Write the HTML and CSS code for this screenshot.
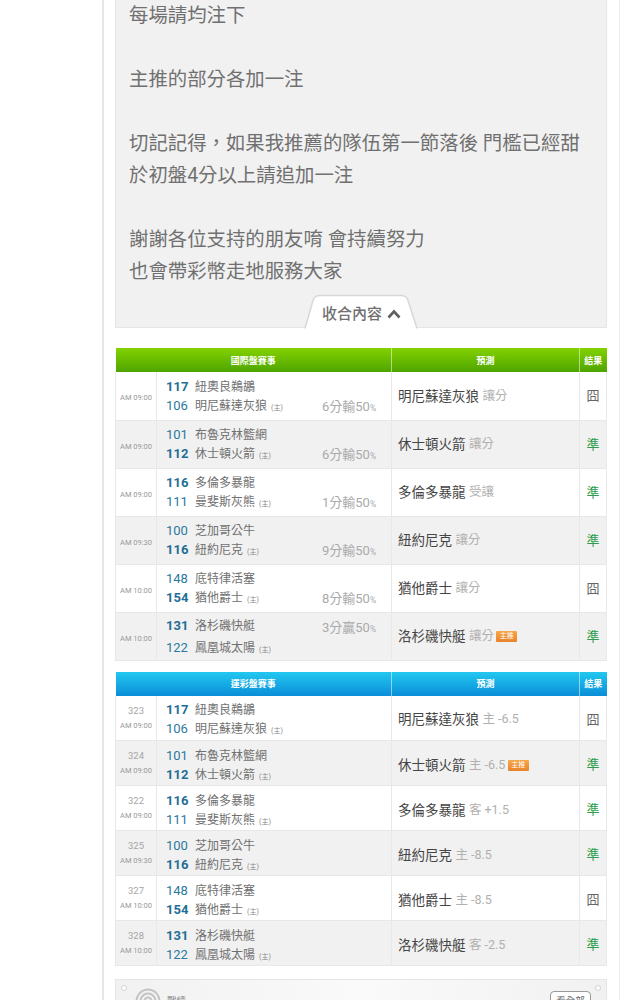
FILE: index.html
```html
<!DOCTYPE html>
<html lang="zh-Hant">
<head>
<meta charset="utf-8">
<title>賽事預測</title>
<link rel="stylesheet" href="styles.css">
</head>
<body>
<main class="wrap">
  <section class="panel">
    <p class="line">每場請均注下</p>
    <p class="line gap">主推的部分各加一注</p>
    <p class="line gap">切記記得，如果我推薦的隊伍第一節落後 門檻已經甜</p>
    <p class="line">於初盤4分以上請追加一注</p>
    <p class="line gap">謝謝各位支持的朋友唷 會持續努力</p>
    <p class="line">也會帶彩幣走地服務大家</p>
    <div class="tab">
      <svg class="tab-bg" width="114" height="34" viewBox="0 0 114 34"><path d="M1 34 L9 6 Q10.500 1 16 1 L97 1 Q102.500 1 104 6 L113 34" fill="#fff" stroke="#d8d8d8" stroke-width="1.500"/></svg>
      <span class="tab-label">收合內容</span>
      <svg class="tab-chev" width="14" height="10" viewBox="0 0 14 10"><path d="M1.500 8.500 L7 2.500 L12.500 8.500" fill="none" stroke="#5f5f5f" stroke-width="2.600"/></svg>
    </div>
  </section>

  <table class="games green">
    <colgroup><col class="c-time"><col class="c-team"><col class="c-pick"><col class="c-res"></colgroup>
    <thead><tr><th colspan="2">國際盤賽事</th><th>預測</th><th>結果</th></tr></thead>
    <tbody>
      <tr><td class="time">AM 09:00</td><td><div class="match"><div class="teams"><div class="t"><b>117</b><span>紐奧良鵜鶘</span></div><div class="t"><i>106</i><span>明尼蘇達灰狼</span><small>(主)</small></div></div><div class="hcp">6分輸50<em>%</em></div></div></td><td class="pick">明尼蘇達灰狼 <span>讓分</span></td><td class="res">囧</td></tr>
      <tr><td class="time">AM 09:00</td><td><div class="match"><div class="teams"><div class="t"><i>101</i><span>布魯克林籃網</span></div><div class="t"><b>112</b><span>休士頓火箭</span><small>(主)</small></div></div><div class="hcp">6分輸50<em>%</em></div></div></td><td class="pick">休士頓火箭 <span>讓分</span></td><td class="res ok">準</td></tr>
      <tr><td class="time">AM 09:00</td><td><div class="match"><div class="teams"><div class="t"><b>116</b><span>多倫多暴龍</span></div><div class="t"><i>111</i><span>曼斐斯灰熊</span><small>(主)</small></div></div><div class="hcp">1分輸50<em>%</em></div></div></td><td class="pick">多倫多暴龍 <span>受讓</span></td><td class="res ok">準</td></tr>
      <tr><td class="time">AM 09:30</td><td><div class="match"><div class="teams"><div class="t"><i>100</i><span>芝加哥公牛</span></div><div class="t"><b>116</b><span>紐約尼克</span><small>(主)</small></div></div><div class="hcp">9分輸50<em>%</em></div></div></td><td class="pick">紐約尼克 <span>讓分</span></td><td class="res ok">準</td></tr>
      <tr><td class="time">AM 10:00</td><td><div class="match"><div class="teams"><div class="t"><i>148</i><span>底特律活塞</span></div><div class="t"><b>154</b><span>猶他爵士</span><small>(主)</small></div></div><div class="hcp">8分輸50<em>%</em></div></div></td><td class="pick">猶他爵士 <span>讓分</span></td><td class="res">囧</td></tr>
      <tr><td class="time">AM 10:00</td><td><div class="match wide"><div class="teams"><div class="t"><b>131</b><span>洛杉磯快艇</span></div><div class="t"><i>122</i><span>鳳凰城太陽</span><small>(主)</small></div></div><div class="hcp top">3分贏50<em>%</em></div></div></td><td class="pick">洛杉磯快艇 <span>讓分</span> <u>主推</u></td><td class="res ok">準</td></tr>
    </tbody>
  </table>

  <table class="games blue">
    <colgroup><col class="c-time"><col class="c-team"><col class="c-pick"><col class="c-res"></colgroup>
    <thead><tr><th colspan="2">運彩盤賽事</th><th>預測</th><th>結果</th></tr></thead>
    <tbody>
      <tr><td class="time"><div class="no">323</div>AM 09:00</td><td><div class="match"><div class="teams"><div class="t"><b>117</b><span>紐奧良鵜鶘</span></div><div class="t"><i>106</i><span>明尼蘇達灰狼</span><small>(主)</small></div></div></div></td><td class="pick">明尼蘇達灰狼 <span>主 -6.5</span></td><td class="res">囧</td></tr>
      <tr><td class="time"><div class="no">324</div>AM 09:00</td><td><div class="match"><div class="teams"><div class="t"><i>101</i><span>布魯克林籃網</span></div><div class="t"><b>112</b><span>休士頓火箭</span><small>(主)</small></div></div></div></td><td class="pick">休士頓火箭 <span>主 -6.5</span> <u>主推</u></td><td class="res ok">準</td></tr>
      <tr><td class="time"><div class="no">322</div>AM 09:00</td><td><div class="match"><div class="teams"><div class="t"><b>116</b><span>多倫多暴龍</span></div><div class="t"><i>111</i><span>曼斐斯灰熊</span><small>(主)</small></div></div></div></td><td class="pick">多倫多暴龍 <span>客 +1.5</span></td><td class="res ok">準</td></tr>
      <tr><td class="time"><div class="no">325</div>AM 09:30</td><td><div class="match"><div class="teams"><div class="t"><i>100</i><span>芝加哥公牛</span></div><div class="t"><b>116</b><span>紐約尼克</span><small>(主)</small></div></div></div></td><td class="pick">紐約尼克 <span>主 -8.5</span></td><td class="res ok">準</td></tr>
      <tr><td class="time"><div class="no">327</div>AM 10:00</td><td><div class="match"><div class="teams"><div class="t"><i>148</i><span>底特律活塞</span></div><div class="t"><b>154</b><span>猶他爵士</span><small>(主)</small></div></div></div></td><td class="pick">猶他爵士 <span>主 -8.5</span></td><td class="res">囧</td></tr>
      <tr><td class="time"><div class="no">328</div>AM 10:00</td><td><div class="match"><div class="teams"><div class="t"><b>131</b><span>洛杉磯快艇</span></div><div class="t"><i>122</i><span>鳳凰城太陽</span><small>(主)</small></div></div></div></td><td class="pick">洛杉磯快艇 <span>客 -2.5</span></td><td class="res ok">準</td></tr>
    </tbody>
  </table>

  <section class="record">
    <span class="dot"></span>
    <svg class="rings" width="26" height="26" viewBox="0 0 26 26"><g fill="none" stroke="#c4c4c4" stroke-width="2"><circle cx="13" cy="13" r="11.500"/><circle cx="13" cy="13" r="7.500"/><circle cx="13" cy="13" r="3.500"/></g></svg>
    <span class="record-title">戰績</span>
    <span class="more">看全部</span>
    <span class="dot"></span>
  </section>
</main>
</body>
</html>
```
FILE: styles.css
```css
html, body {
  margin: 0;
  height: 1000px;
  overflow: hidden;
  background: #fff;
}
body {
  font-family: Roboto, "Noto Sans CJK TC", sans-serif;
}
.wrap {
  margin-left: 102px;
  padding: 0 12px 0 11px;
  border-left: 2px solid #e6e6e6;
  border-right: 1px solid #ececec;
  width: 492px;
  height: 1000px;
}
.panel {
  display: flex;
  flex-direction: column;
  height: 328px;
  box-sizing: border-box;
  padding: 0 0 0 13px;
  background: #f1f1f1;
  border: 1px solid #e6e6e6;
  border-top: 0;
}
.line {
  margin: 0;
  height: 32px;
  font-size: 19.400px;
  line-height: 32px;
  color: #707070;
  white-space: nowrap;
}
.gap { margin-top: 32px; }
.tab {
  position: relative;
  display: flex;
  align-items: center;
  align-self: flex-start;
  box-sizing: border-box;
  margin: 6px 0 0 175px;
  width: 114px;
  height: 35px;
  padding: 6px 0 0 18px;
}
.tab-bg { position: absolute; left: 0; top: 0; height: 35px; }
.tab-label {
  position: relative;
  font-size: 15px;
  font-weight: 500;
  color: #707070;
  line-height: 20px;
}
.tab-chev { position: relative; margin-left: 5px; }
.games {
  width: 492px;
  border-collapse: collapse;
  table-layout: fixed;
  background: #fff;
}
.green { margin-top: 20px; }
.blue { margin-top: 11px; }
.c-time { width: 41px; }
.c-team { width: 235px; }
.c-res { width: 27px; }
.games th {
  height: 24px;
  padding: 0;
  font-size: 9px;
  font-weight: 700;
  color: #fff;
  border-right: 1px solid rgba(255, 255, 255, .5);
}
.games th:last-child { border-right: 0; }
.green thead tr { background: linear-gradient(#84d200, #4ea400); }
.blue thead tr { background: linear-gradient(#22c8f0, #0a8ed8); }
.games td {
  padding: 0;
  border: 1px solid #e8e8e8;
  border-top: 0;
}
.green tbody tr { height: 48px; }
.blue tbody tr { height: 45px; }
.games tbody tr:nth-child(even) { background: #f1f1f1; }
.time {
  text-align: center;
  font-size: 7.500px;
  color: #999;
  line-height: 15px;
}
.games.green .time { padding-top: 4px; }
.no { font-size: 9.500px; color: #a5a5a5; line-height: 15px; }
.match {
  display: flex;
  padding-left: 9px;
  height: 100%;
  align-items: center;
}
.blue .match { padding-top: 3px; }
.teams { display: flex; flex-direction: column; gap: 2px; }
.wide .teams { gap: 5px; }
.t {
  display: flex;
  align-items: baseline;
  height: 17px;
  line-height: 17px;
  white-space: nowrap;
}
.t b, .t i {
  width: 29px;
  font-size: 13px;
  font-style: normal;
  color: #2a7a9e;
}
.t b { font-weight: 700; color: #1f6f94; }
.t span { font-size: 12px; color: #707070; }
.t small { margin-left: 4px; font-size: 7px; color: #888; }
.hcp {
  position: absolute;
  margin: 19px 0 0 156px;
  font-size: 13px;
  color: #aaa;
  white-space: nowrap;
}
.hcp em { font-style: normal; font-size: 8.500px; }
.hcp.top { margin-top: -20px; }
.pick {
  padding-left: 6px !important;
  font-size: 13.500px;
  color: #444;
  white-space: nowrap;
}
.games.green .pick, .games.green .res { padding-bottom: 2px; }
.blue .pick, .blue .res { padding-top: 1px; }
.pick span { font-size: 12.500px; color: #b0b0b0; position: relative; top: -1px; }
.pick u {
  display: inline-block;
  width: 21px;
  height: 11px;
  margin-left: -1px;
  border-radius: 1px;
  background: linear-gradient(#f6a84a, #e9822a);
  color: #fff;
  font-size: 7px;
  line-height: 11px;
  text-align: center;
  text-decoration: none;
  vertical-align: 3px;
}
.res {
  text-align: center;
  font-size: 13px;
  color: #666;
}
.res.ok { color: #2c9e4c; }
.record {
  display: flex;
  align-items: flex-start;
  box-sizing: border-box;
  margin-top: 13px;
  height: 60px;
  padding: 5px 5px 0 5px;
  background: linear-gradient(90deg, #f1f1f1, #fafafa 50%, #f1f1f1);
  border: 1px solid #e6e6e6;
}
.dot {
  width: 4px;
  height: 4px;
  border: 1px solid #d4d4d4;
  border-radius: 50%;
  background: #fff;
}
.rings { margin: 3px 0 0 8px; }
.record-title { margin: 9px 0 0 6px; font-size: 9.500px; color: #888; line-height: 14px; }
.more {
  box-sizing: border-box;
  margin: 6px 4px 0 auto;
  width: 41px;
  height: 24px;
  border: 1px solid #999;
  border-radius: 4px;
  background: #fff;
  font-size: 9.500px;
  line-height: 18px;
  text-align: center;
  color: #666;
}
```
